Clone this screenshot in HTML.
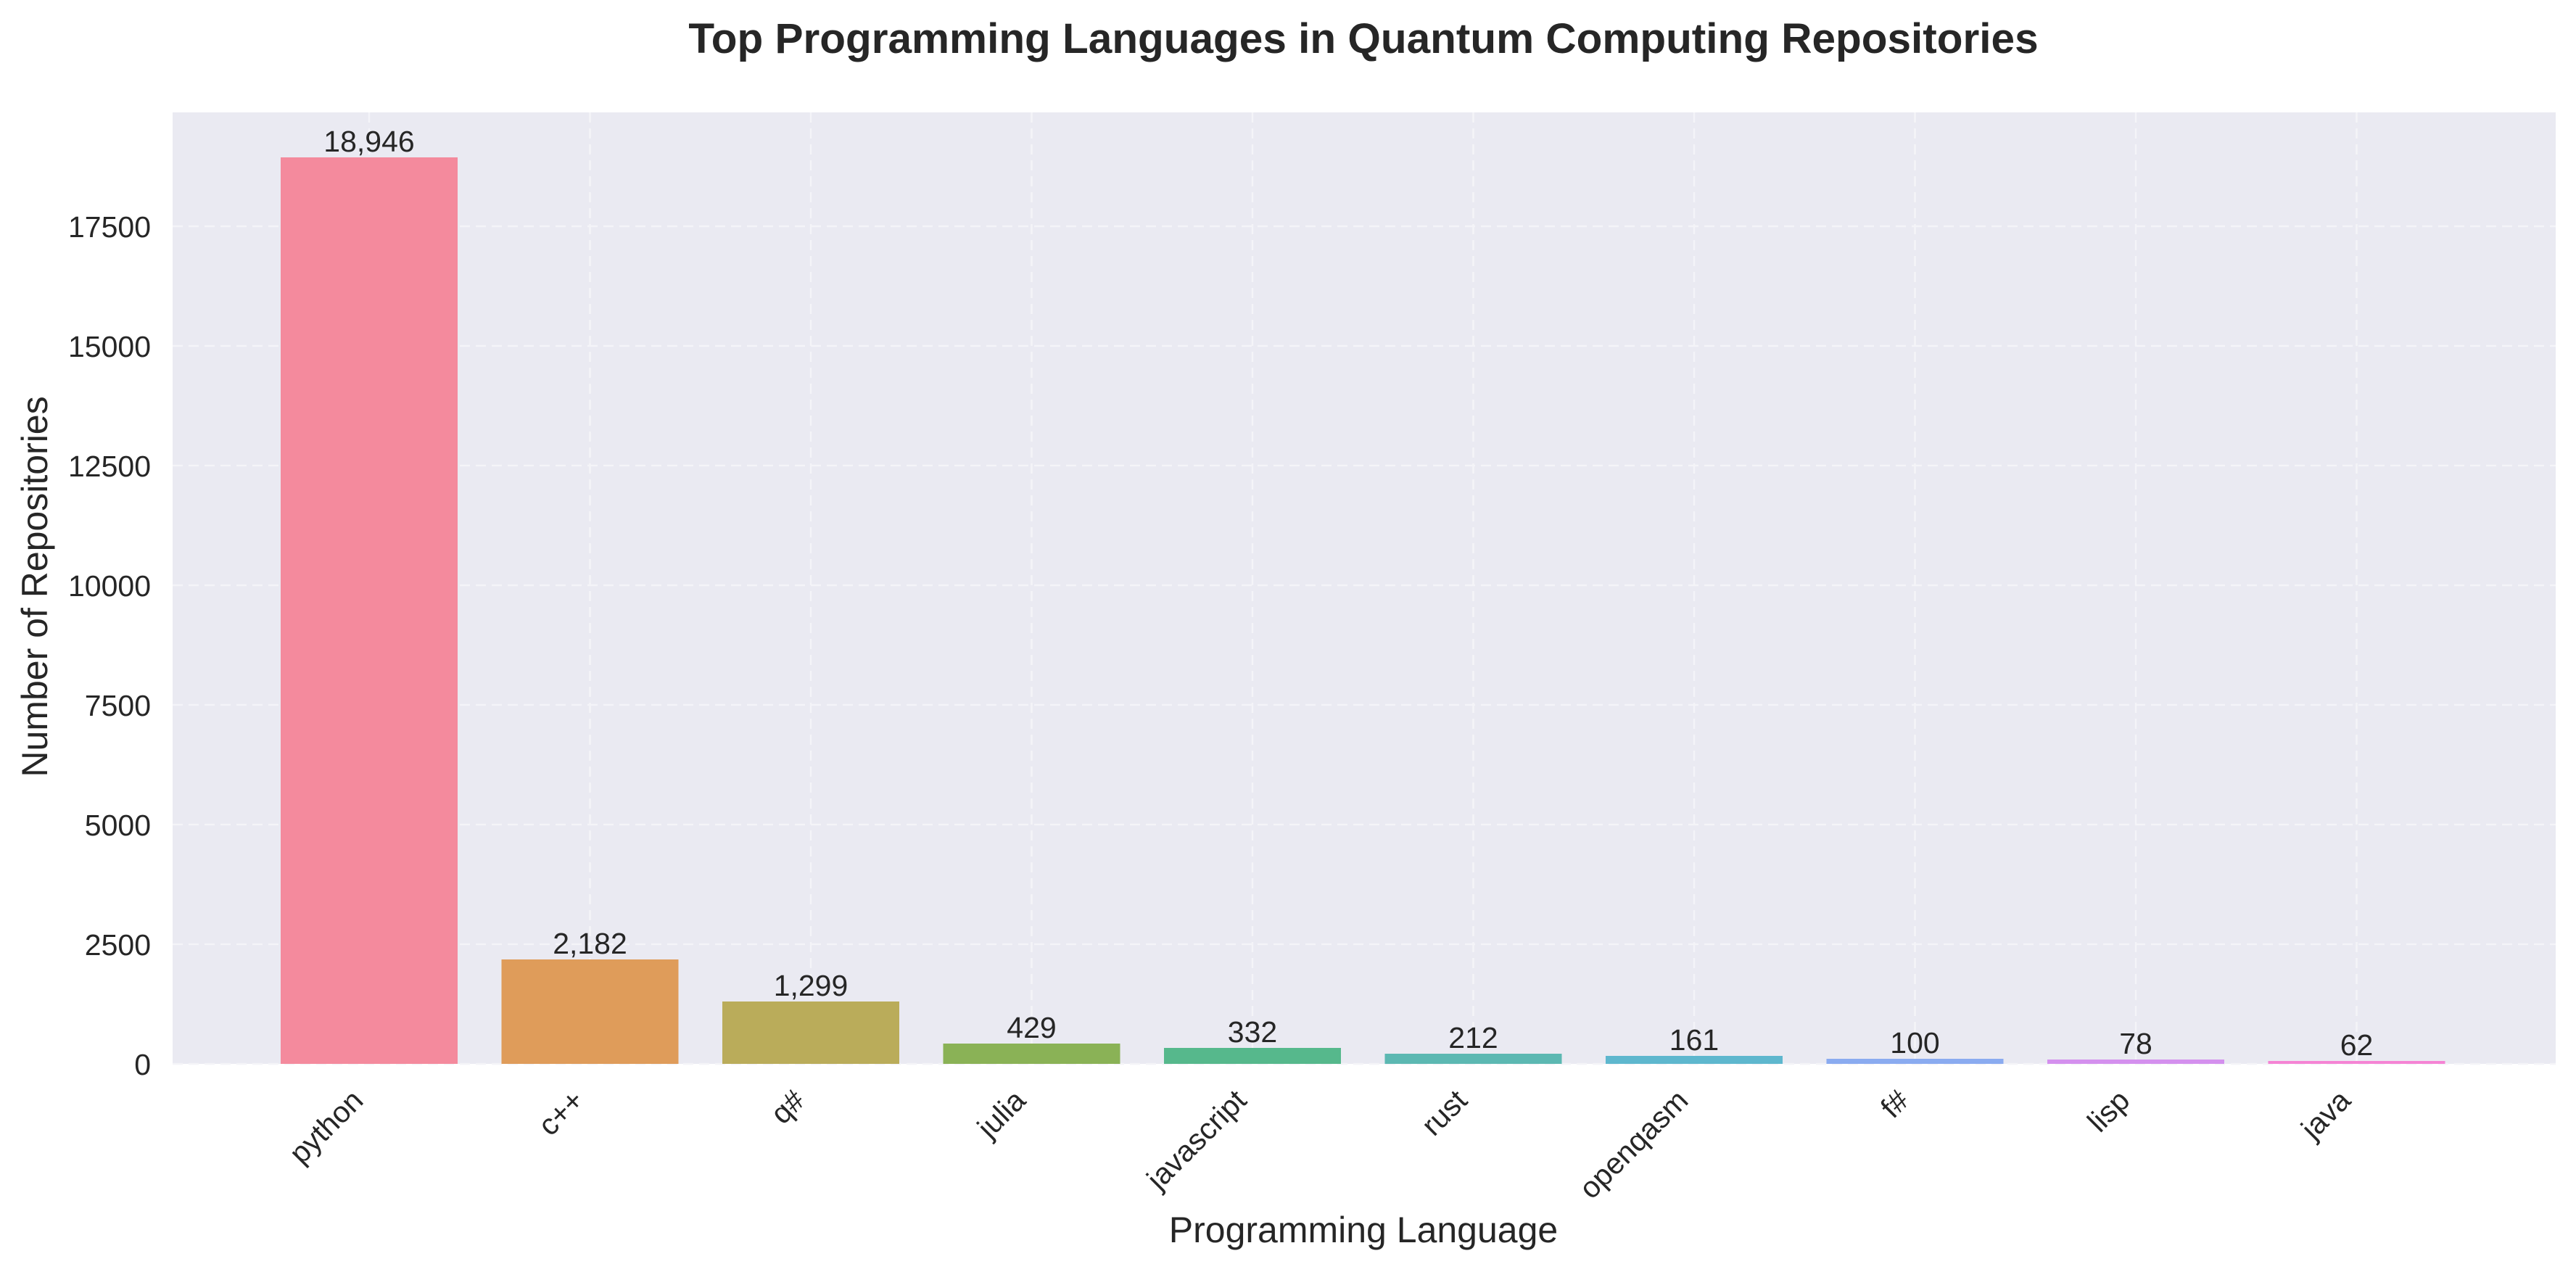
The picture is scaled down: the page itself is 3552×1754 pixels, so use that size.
<!DOCTYPE html>
<html><head><meta charset="utf-8"><style>
html,body{margin:0;padding:0;background:#fff;}
svg{display:block;}
text{font-family:"Liberation Sans",Arial,sans-serif;fill:#262626;}
</style></head><body>
<svg width="3552" height="1754" viewBox="0 0 3552 1754" xmlns="http://www.w3.org/2000/svg">
<rect x="0" y="0" width="3552" height="1754" fill="#fff"/>
<rect x="238" y="155" width="3286" height="1312" fill="#EAEAF2"/>
<g stroke="#F4F4F8" stroke-width="2.5" stroke-dasharray="14,8">
<line x1="238" x2="3524" y1="1467" y2="1467"/>
<line x1="238" x2="3524" y1="1302" y2="1302"/>
<line x1="238" x2="3524" y1="1137" y2="1137"/>
<line x1="238" x2="3524" y1="972" y2="972"/>
<line x1="238" x2="3524" y1="807" y2="807"/>
<line x1="238" x2="3524" y1="642" y2="642"/>
<line x1="238" x2="3524" y1="477" y2="477"/>
<line x1="238" x2="3524" y1="312" y2="312"/>
<line y1="155" y2="1467" x1="509" x2="509"/>
<line y1="155" y2="1467" x1="813.5" x2="813.5"/>
<line y1="155" y2="1467" x1="1118" x2="1118"/>
<line y1="155" y2="1467" x1="1422.5" x2="1422.5"/>
<line y1="155" y2="1467" x1="1727" x2="1727"/>
<line y1="155" y2="1467" x1="2031.5" x2="2031.5"/>
<line y1="155" y2="1467" x1="2336" x2="2336"/>
<line y1="155" y2="1467" x1="2640.5" x2="2640.5"/>
<line y1="155" y2="1467" x1="2945" x2="2945"/>
<line y1="155" y2="1467" x1="3249.5" x2="3249.5"/>
</g>
<g>
<rect x="387" y="217" width="244" height="1250" fill="#F48A9D"/>
<rect x="691.5" y="1323" width="244" height="144" fill="#DF9C5A"/>
<rect x="996" y="1381" width="244" height="86" fill="#BAAC5A"/>
<rect x="1300.5" y="1439" width="244" height="28" fill="#8AB256"/>
<rect x="1605" y="1445" width="244" height="22" fill="#56B88C"/>
<rect x="1909.5" y="1453" width="244" height="14" fill="#5CB8B2"/>
<rect x="2214" y="1456" width="244" height="11" fill="#5EB7CE"/>
<rect x="2518.5" y="1460" width="244" height="7" fill="#8AABF0"/>
<rect x="2823" y="1461" width="244" height="6" fill="#D490EE"/>
<rect x="3127.5" y="1463" width="244" height="4" fill="#F584D4"/>
</g>
<g font-size="41" text-anchor="middle">
<text x="509" y="209">18,946</text>
<text x="813.5" y="1315">2,182</text>
<text x="1118" y="1373">1,299</text>
<text x="1422.5" y="1431">429</text>
<text x="1727" y="1437">332</text>
<text x="2031.5" y="1445">212</text>
<text x="2336" y="1448">161</text>
<text x="2640.5" y="1452">100</text>
<text x="2945" y="1453">78</text>
<text x="3249.5" y="1455">62</text>
</g>
<g font-size="41" text-anchor="end">
<text x="208" y="1482">0</text>
<text x="208" y="1317">2500</text>
<text x="208" y="1152">5000</text>
<text x="208" y="987">7500</text>
<text x="208" y="822">10000</text>
<text x="208" y="657">12500</text>
<text x="208" y="492">15000</text>
<text x="208" y="327">17500</text>
</g>
<g font-size="41" text-anchor="end">
<text transform="translate(503,1520) rotate(-45)">python</text>
<text transform="translate(807.5,1520) rotate(-45)">c++</text>
<text transform="translate(1112,1520) rotate(-45)">q#</text>
<text transform="translate(1416.5,1520) rotate(-45)">julia</text>
<text transform="translate(1721,1520) rotate(-45)">javascript</text>
<text transform="translate(2025.5,1520) rotate(-45)">rust</text>
<text transform="translate(2330,1520) rotate(-45)">openqasm</text>
<text transform="translate(2634.5,1520) rotate(-45)">f#</text>
<text transform="translate(2939,1520) rotate(-45)">lisp</text>
<text transform="translate(3243.5,1520) rotate(-45)">java</text>
</g>
<text x="1880" y="1713" font-size="50" text-anchor="middle">Programming Language</text>
<text transform="translate(65,809) rotate(-90)" font-size="50" text-anchor="middle">Number of Repositories</text>
<text x="1880" y="73" font-size="58.5" font-weight="bold" text-anchor="middle">Top Programming Languages in Quantum Computing Repositories</text>
</svg>
</body></html>
